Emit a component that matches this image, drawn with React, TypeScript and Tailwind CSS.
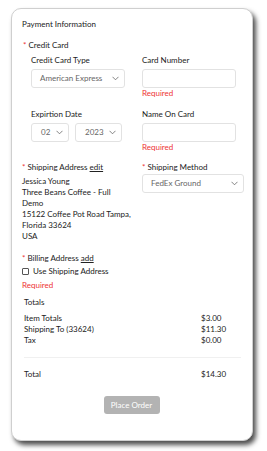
import React from "react"

const Chevron = () => (
  <svg width="7" height="5" viewBox="0 0 7 5" className="shrink-0">
    <polyline points="0.5,0.8 3.5,3.8 6.5,0.8" fill="none" stroke="#666" strokeWidth="0.8" />
  </svg>
)

const Select = ({ value, className }: { value: string; className: string }) => (
  <div className={`flex items-center justify-between border border-[#e2e2e2] rounded-[3px] bg-white text-[#666] ${className}`}>
    <span>{value}</span>
    <Chevron />
  </div>
)

const Req = () => <span className="text-[#e33] mr-[2px]">*</span>

const App = () => {
  return (
    <div className="w-[267px] h-[451px] bg-white pt-[8px] pl-[11px] text-[8px] leading-[11px] text-[#222]" style={{ fontFamily: "Lato, 'Noto Sans', sans-serif" }}>
      <div className="w-[242px] h-[433px] bg-white rounded-[10px] border border-[#cfcfcf] shadow-[3px_4px_5px_rgba(0,0,0,0.7)] pl-[10px] pr-[10px] pt-[10px]">
        <p className="text-[8px] leading-[11px]">Payment Information</p>

        <p className="mt-[10px] ml-[1px]"><Req />Credit Card</p>

        {/* credit card grid */}
        <div className="ml-[9px] mt-[4px] grid grid-cols-[111px_94px]">
          <div>
            <p>Credit Card Type</p>
            <Select value="American Express" className="mt-[3px] w-[94px] h-[19px] pl-[8px] pr-[5px]" />
          </div>
          <div>
            <p>Card Number</p>
            <div className="mt-[3px] w-[94px] h-[19px] border border-[#e2e2e2] rounded-[3px]" />
            <p className="text-[#e33]">Required</p>
          </div>

          <div className="mt-[10px]">
            <p>Expirtion Date</p>
            <div className="flex gap-[6px] mt-[3px]">
              <Select value="02" className="w-[38px] h-[19px] pl-[9px] pr-[5px]" />
              <Select value="2023" className="w-[47px] h-[19px] pl-[9px] pr-[5px]" />
            </div>
          </div>
          <div className="mt-[10px]">
            <p>Name On Card</p>
            <div className="mt-[3px] w-[94px] h-[19px] border border-[#e2e2e2] rounded-[3px]" />
            <p className="text-[#e33]">Required</p>
          </div>
        </div>

        {/* shipping */}
        <div className="mt-[9px] grid grid-cols-[120px_102px]">
          <div>
            <p><Req />Shipping Address <span className="underline">edit</span></p>
            <div className="mt-[3px] leading-[11px]">
              <p>Jessica Young</p>
              <p>Three Beans Coffee - Full</p>
              <p>Demo</p>
              <p>15122 Coffee Pot Road Tampa,</p>
              <p>Florida 33624</p>
              <p>USA</p>
            </div>
          </div>
          <div>
            <p><Req />Shipping Method</p>
            <Select value="FedEx Ground" className="mt-[1px] w-[102px] h-[19px] pl-[8px] pr-[5px]" />
          </div>
        </div>

        {/* billing */}
        <div className="mt-[11px]">
          <p><Req />Billing Address <span className="underline">add</span></p>
          <label className="flex items-center gap-[4px] mt-[2px]">
            <span className="w-[7px] h-[7px] border border-[#555] rounded-[1px]" />
            <span>Use Shipping Address</span>
          </label>
          <p className="text-[#e33] mt-[3px]">Required</p>
        </div>

        {/* totals */}
        <div className="ml-[2px] mr-[1px] mt-[6px]">
          <p>Totals</p>
          <div className="mt-[5px] grid grid-cols-[177px_1fr]">
            <span>Item Totals</span><span>$3.00</span>
            <span>Shipping To (33624)</span><span>$11.30</span>
            <span>Tax</span><span>$0.00</span>
          </div>
          <div className="mt-[11px] border-t border-[#f0f0f0]" />
          <div className="mt-[11px] grid grid-cols-[177px_1fr]">
            <span>Total</span><span>$14.30</span>
          </div>
        </div>

        <div className="flex justify-center mt-[16px] pr-[1px]">
          <button className="w-[56px] h-[18px] rounded-[3px] bg-[#b3b3b3] text-white text-[8px]">Place Order</button>
        </div>
      </div>
    </div>
  )
}

export default App
